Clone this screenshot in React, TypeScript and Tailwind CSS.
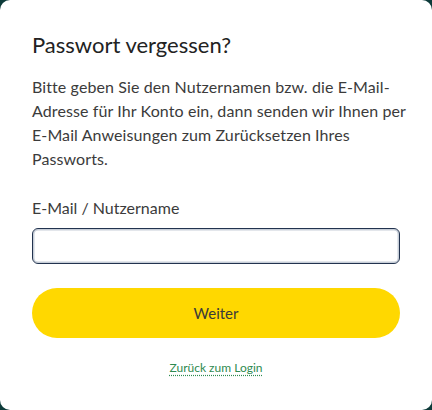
import React from "react";

const App: React.FC = () => {
  return (
    <div className="w-[432px] h-[410px] bg-[#0d3b3a]" style={{ fontFamily: "Lato, 'Liberation Sans', sans-serif" }}>
      <div className="w-full h-full bg-white rounded-[10px] px-8 pt-[31px]">
        <h1 className="text-[22px] leading-[28px] text-[#222222]">Passwort vergessen?</h1>

        <p className="mt-4 text-[16px] leading-6 text-[#3b3b3b] whitespace-nowrap tracking-[0.1px]">
          Bitte geben Sie den Nutzernamen bzw. die E-Mail-
          <br />
          Adresse für Ihr Konto ein, dann senden wir Ihnen per
          <br />
          E-Mail Anweisungen zum Zurücksetzen Ihres
          <br />
          Passworts.
        </p>

        <label className="block mt-[25px] text-[16px] leading-6 text-[#3b3b3b]">E-Mail / Nutzername</label>
        <input
          type="text"
          className="mt-2 block w-full h-9 rounded-[6px] border border-[#22334f] shadow-[inset_0_0_0_1.5px_#c7ced8] bg-white outline-none"
        />

        <button className="mt-6 w-full h-[50px] rounded-full bg-[#ffd800] text-[15px] text-[#3a3a3a]">Weiter</button>

        <div className="mt-[21px] flex justify-center">
          <a className="text-[12px] leading-[18px] text-[#2e8a4f] underline decoration-dotted decoration-[#2e8a4f] underline-offset-[3px]">
            Zurück zum Login
          </a>
        </div>
      </div>
    </div>
  );
};

export default App;
